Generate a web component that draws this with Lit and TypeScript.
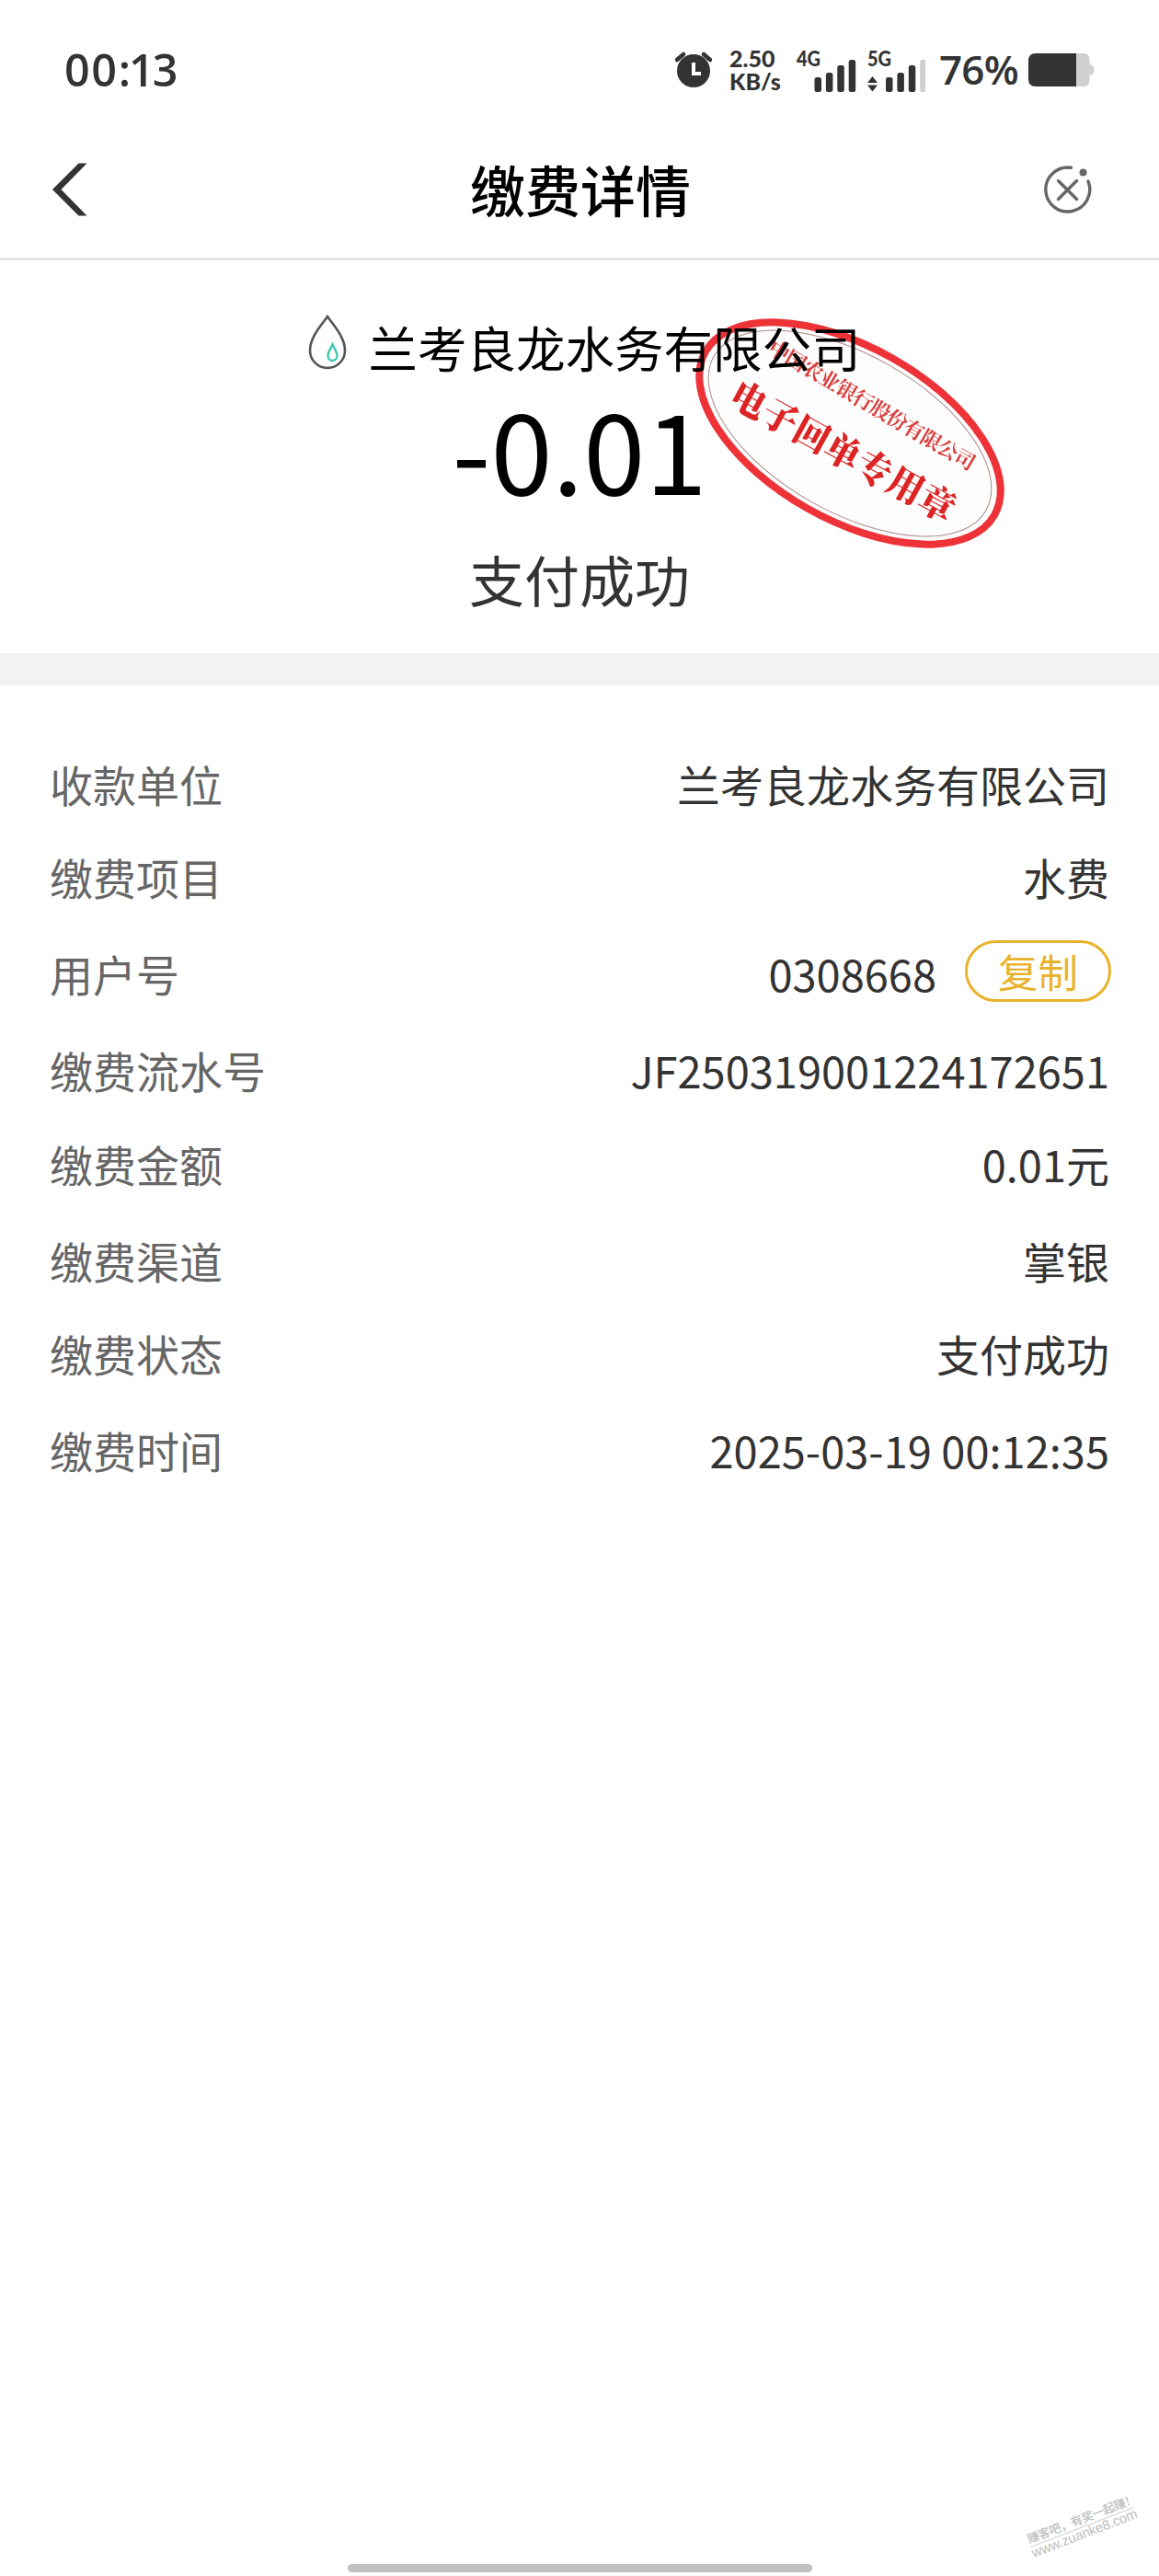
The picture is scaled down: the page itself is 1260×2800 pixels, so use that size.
import { LitElement, html, css, svg } from "lit";
import { customElement, property } from "lit/decorators.js";

const SANS = css`"Noto Sans CJK SC", "Noto Sans", sans-serif`;

@customElement("status-bar")
class StatusBar extends LitElement {
  static styles = css`
    :host { display: block; }
    .bar {
      display: flex; align-items: center; justify-content: space-between;
      height: 152px; padding: 0 70px 0 70px; box-sizing: border-box;
      color: #333; font-family: "Open Sans", "Noto Sans", sans-serif; font-weight: 600;
    }
    .time { font-size: 48.5px; letter-spacing: 1.6px; line-height: 60px; margin-bottom: 2px; }
    .minutes { letter-spacing: -2px; }
    .icons { display: flex; align-items: center; }
    .clock { width: 40px; height: 40px; display: block; margin: 0 19px 0 0; }
    .speed { width: 72px; font: 900 25px/25px "Lato", "Open Sans", sans-serif; margin-bottom: 1px; }
    .signal { display: block; height: 52px; margin-bottom: 2px; }
    .pct { font-size: 44px; line-height: 60px; width: 97px; margin: 0 0 2px 15px; letter-spacing: -0.8px; }
    .battery { display: block; width: 72px; height: 36px; }
    text { font-family: "Lato", "Open Sans", sans-serif; font-weight: 900; font-size: 22px; }
  `;

  bars(x: number, weak: boolean) {
    const tops = [31, 26, 18, 12];
    return tops.map((t, i) => svg`<rect x=${x + i * 12.4} y=${t} width="7.5" height=${47 - t} rx="2.5"
      fill=${weak && i === 3 ? "#d0d0d0" : "#333"}/>`);
  }

  render() {
    return html`<div class="bar">
      <div class="time">00<span class="minutes">:13</span></div>
      <div class="icons">
        <svg class="clock" viewBox="0 0 40 40">
          <circle cx="20" cy="21" r="18" fill="#333"/>
          <path d="M2 9L9 3M38 9L31 3" stroke="#333" stroke-width="4.5" stroke-linecap="round"/>
          <path d="M20 12V24H28" fill="none" stroke="#fff" stroke-width="4"/>
        </svg>
        <div class="speed">2.50<br>KB/s</div>
        <svg class="signal" width="141" viewBox="-1 -4 141 52">
          <text x="0" y="19" fill="#333" textLength="26" lengthAdjust="spacingAndGlyphs">4G</text>
          ${this.bars(19.5, false)}
          <text x="77" y="19" fill="#333" textLength="26" lengthAdjust="spacingAndGlyphs">5G</text>
          <path d="M77 37L82.500 30L88 37ZM77 39.500L82.500 46.500L88 39.500Z" fill="#333"/>
          ${this.bars(97, true)}
        </svg>
        <div class="pct">76%</div>
        <svg class="battery" viewBox="0 0 72 36">
          <path d="M52 0H60Q66.500 0 66.500 7V12Q71.500 13 71.500 18T66.500 24V29Q66.500 36 60 36H52Z" fill="#d0d0d0"/>
          <path d="M52 0H8Q0 0 0 8V28Q0 36 8 36H52Z" fill="#333"/>
        </svg>
      </div>
    </div>`;
  }
}

@customElement("nav-header")
class NavHeader extends LitElement {
  static styles = css`
    :host { display: block; }
    .nav {
      display: flex; align-items: center; justify-content: space-between;
      height: 131px; padding: 0 72px 21px 56px; box-sizing: border-box;
      border-bottom: 3px solid #e5e5e5;
    }
    .back { width: 54px; height: 58px; display: block; }
    .title { font: 500 60px/80px ${SANS}; color: #000; margin: 0 0 2px 18px; }
    .close { width: 54px; height: 54px; display: block; }
  `;
  render() {
    return html`<div class="nav">
      <svg class="back" viewBox="0 0 54 58"><path d="M1 29L29.500 0.500H38.500L10.500 29L38.500 57.500H29.500Z" fill="#333"/></svg>
      <div class="title">缴费详情</div>
      <svg class="close" viewBox="0 0 54 54" fill="none" stroke="#666" stroke-width="3.4" stroke-linecap="round">
        <path d="M30.500 3.300A24 24 0 1 0 49 18"/>
        <path d="M16.500 17.500L36.500 37.500M36.500 17.500L16.500 37.500"/>
        <circle cx="43.500" cy="8.500" r="4" fill="#666" stroke="none"/>
      </svg>
    </div>`;
  }
}

@customElement("receipt-stamp")
class ReceiptStamp extends LitElement {
  static styles = css`
    :host { display: block; }
    .seal { display: block; width: 340px; height: 252px; }
    text { font-family: "Noto Serif CJK SC", "Noto Sans CJK SC", serif; text-anchor: middle; }
    .org { font-size: 22px; font-weight: 700; fill: #d8403f; }
    .name { font-size: 40px; font-weight: 900; fill: #dc2424; }
  `;
  render() {
    return html`<svg class="seal" viewBox="-170 -126 340 252">
      <g transform="rotate(29.5)">
        <ellipse rx="180.500" ry="93.800" fill="#fefdfd" stroke="#ee3338" stroke-width="8"/>
        <ellipse rx="170" ry="85.500" fill="none" stroke="#a88" stroke-width="1"/>
      </g>
      <text class="org" transform="translate(24 -30.500) rotate(30.300)" y="8" textLength="256">中国农业银行股份有限公司</text>
      <text class="name" transform="translate(-7.500 20) rotate(28.700)" y="14.500" textLength="272" lengthAdjust="spacingAndGlyphs">电子回单专用章</text>
    </svg>`;
  }
}

@customElement("payment-summary")
class PaymentSummary extends LitElement {
  static styles = css`
    :host { display: block; }
    .summary {
      position: relative; isolation: isolate; background: #fff;
      height: 427px; box-sizing: border-box; padding-top: 57px;
      display: flex; flex-direction: column; align-items: center;
      font-family: ${SANS}; color: #000;
    }
    .payee { display: flex; align-items: center; height: 74px; gap: 24px; margin-left: 10px; }
    .drop { width: 42px; height: 60px; display: block; margin-bottom: 10px; }
    .name { font-size: 53.5px; line-height: 74px; }
    .amount { font-size: 121px; line-height: 160px; height: 160px; margin-top: -8px; }
    .state { font-size: 60px; line-height: 80px; color: #333; margin-top: 23px; }
    .stamp { position: absolute; left: 754px; top: 62px; mix-blend-mode: multiply; }
  `;
  render() {
    return html`<div class="summary">
      <div class="payee">
        <svg class="drop" viewBox="0 0 42 60" fill="none">
          <path d="M21 2C15 11 2 24 2 39A19 19 0 0 0 40 39C40 24 27 11 21 2Z" stroke="#555" stroke-width="2.600"/>
          <path d="M26.500 32.500C24.500 37 21.500 40 21.500 44.500A5 5.500 0 0 0 31.500 44.500C31.500 40 28.500 37 26.500 32.500Z" stroke="#3cc8b4" stroke-width="2.400"/>
        </svg>
        <div class="name">兰考良龙水务有限公司</div>
      </div>
      <div class="amount">-0.01</div>
      <div class="state">支付成功</div>
      <receipt-stamp class="stamp"></receipt-stamp>
    </div>`;
  }
}

interface Detail { label: string; value: string; copy?: boolean; }

@customElement("detail-list")
class DetailList extends LitElement {
  @property({ attribute: false }) items: Detail[] = [];
  static styles = css`
    :host { display: block; }
    .list {
      display: grid; grid-template-rows: 101px 105px 105px 102px 105px 101px 105px 64px;
      padding: 75px 54px 0; border-top: 35px solid #f2f2f2;
      font: 400 47px/64px ${SANS};
    }
    .row { display: flex; justify-content: space-between; align-items: flex-start; height: 64px; }
    .label { color: #666; }
    .value { color: #333; display: flex; align-items: center; height: 64px; }
    .copy {
      box-sizing: border-box; width: 159px; height: 67px; margin: -5px -2px 0 31px;
      border: 3.5px solid #e9b22c; border-radius: 34px; background: none; padding: 0;
      font: 400 43.5px/58px ${SANS}; color: #e9b22c; text-align: center;
    }
  `;
  render() {
    return html`<div class="list">${this.items.map((d) => html`
      <div class="row">
        <span class="label">${d.label}</span>
        <span class="value">${d.value}${d.copy ? html`<button class="copy">复制</button>` : ""}</span>
      </div>`)}</div>`;
  }
}

@customElement("app-root")
class AppRoot extends LitElement {
  static styles = css`
    :host { display: block; }
    .page {
      width: 1260px; height: 2800px; background: #fff; overflow: hidden;
      display: flex; flex-direction: column;
    }
    .foot { margin-top: auto; display: flex; flex-direction: column; }
    .mark { align-self: flex-end; width: 130px; height: 80px; margin-right: 20px; display: block; }
    .cn { font: 500 13px ${SANS}; }
    .url { font: 15px "Liberation Sans", sans-serif; }
    .home { align-self: center; width: 505px; height: 9px; border-radius: 5px; background: #c1c1c1; margin-bottom: 4px; }
  `;
  private items: Detail[] = [
    { label: "收款单位", value: "兰考良龙水务有限公司" },
    { label: "缴费项目", value: "水费" },
    { label: "用户号", value: "0308668", copy: true },
    { label: "缴费流水号", value: "JF250319001224172651" },
    { label: "缴费金额", value: "0.01元" },
    { label: "缴费渠道", value: "掌银" },
    { label: "缴费状态", value: "支付成功" },
    { label: "缴费时间", value: "2025-03-19 00:12:35" },
  ];
  render() {
    return html`<div class="page">
      <status-bar></status-bar>
      <nav-header></nav-header>
      <payment-summary></payment-summary>
      <detail-list .items=${this.items}></detail-list>
      <div class="foot">
        <svg class="mark" viewBox="0 0 130 80" fill="#bdbdbd">
          <g transform="translate(10.500 61.500) rotate(-21)">
            <text class="cn" x="0" y="-4" textLength="126">赚客吧，有奖一起赚！</text>
            <path d="M0 0H120" stroke="#d0d0d0" stroke-width="1"/>
            <text class="url" x="-1" y="12" textLength="122">www.zuanke8.com</text>
          </g>
        </svg>
        <div class="home"></div>
      </div>
    </div>`;
  }
}
